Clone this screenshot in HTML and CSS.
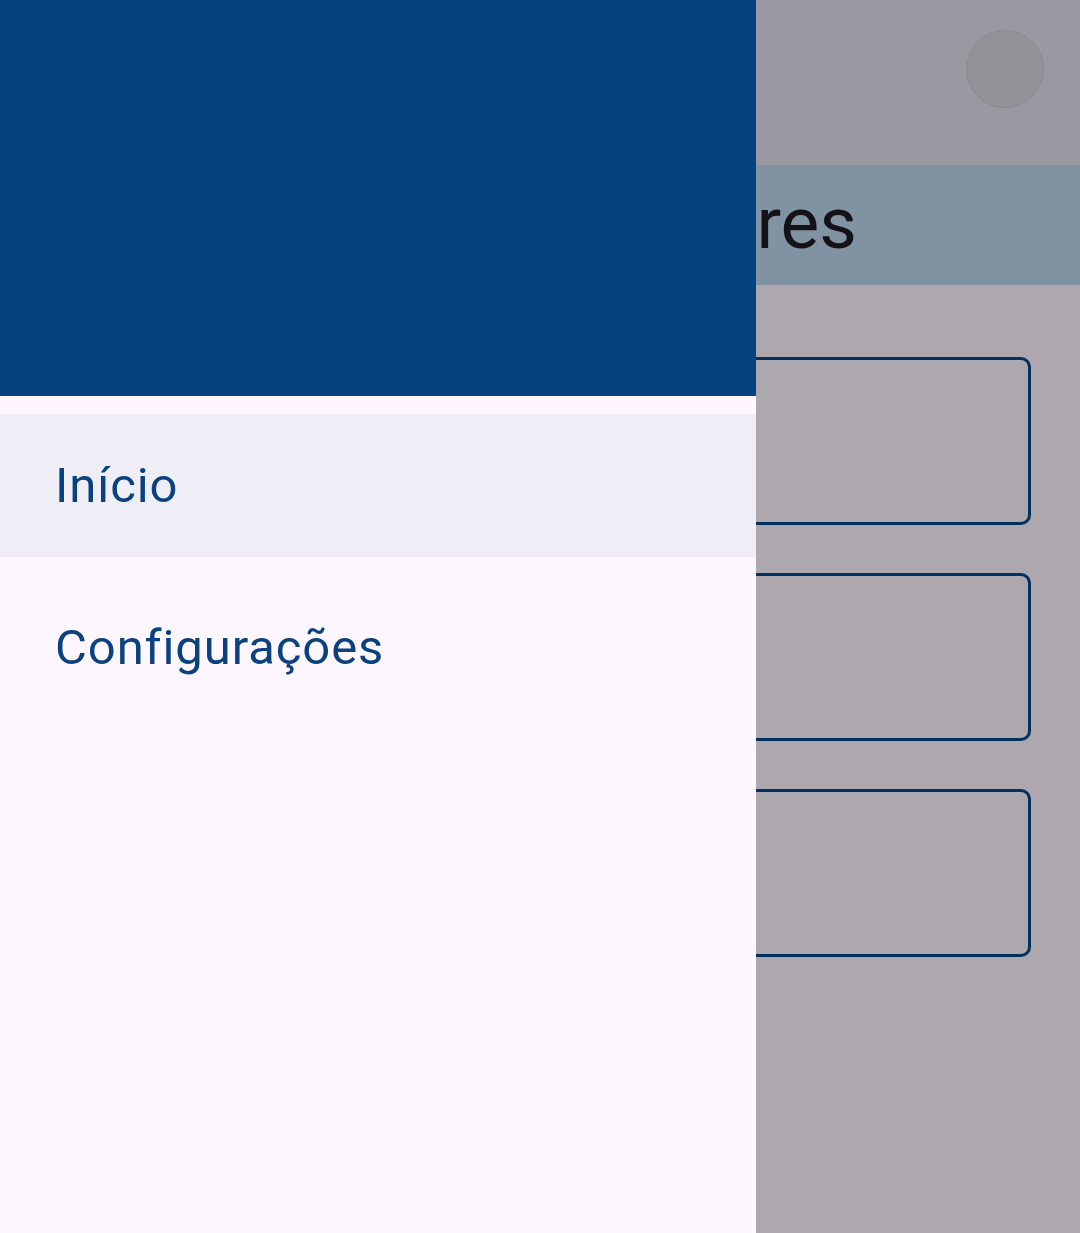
FILE: index.html
```html
<!DOCTYPE html>
<html lang="pt">
<head>
<meta charset="utf-8">
<link rel="stylesheet" href="styles.css">
</head>
<body>
<div class="app">
  <div class="topbar"><div class="avatar"></div></div>
  <div class="titlebar"><span class="title">Leitores</span></div>
  <div class="content">
    <div class="card"></div>
    <div class="card"></div>
    <div class="card"></div>
  </div>
</div>
<nav class="drawer">
  <div class="drawer-header"></div>
  <ul class="nav">
    <li class="nav-item selected">Início</li>
    <li class="nav-item">Configurações</li>
  </ul>
</nav>
</body>
</html>
```

FILE: styles.css
```css
* { box-sizing: border-box; }
html, body { margin: 0; padding: 0; }
body {
  width: 1080px;
  height: 1233px;
  overflow: hidden;
  position: relative;
  font-family: Roboto, "Noto Sans", sans-serif;
  background: #aca8ad;
}
.app {
  display: flex;
  flex-direction: column;
  height: 100%;
}
.topbar {
  height: 165px;
  background: #9a99a2;
  display: flex;
  justify-content: flex-end;
  align-items: flex-start;
  padding: 30px 36px 0 0;
}
.avatar {
  width: 78px;
  height: 78px;
  border-radius: 50%;
  background: #939296;
  border: 1px solid #8a8a8e;
}
.titlebar {
  height: 120px;
  background: #8192a2;
  display: flex;
  align-items: center;
  justify-content: flex-end;
  padding-right: 223px;
}
.title {
  font-size: 73px;
  color: #141218;
  line-height: 1;
  margin-bottom: 4px;
}
.content {
  display: flex;
  flex-direction: column;
  gap: 48px;
  padding: 72px 49px 0 48px;
}
.card {
  height: 168px;
  border: 3px solid #04305f;
  border-radius: 10px;
}
.drawer {
  position: absolute;
  left: 0;
  top: 0;
  width: 756px;
  height: 1233px;
  background: #fef7ff;
}
.drawer-header {
  height: 396px;
  background: #044280;
}
.nav {
  list-style: none;
  margin: 0;
  padding: 18px 0 0 0;
  display: flex;
  flex-direction: column;
  gap: 19px;
}
.nav-item {
  height: 143px;
  display: flex;
  align-items: center;
  padding-left: 55px;
  font-size: 49px;
  letter-spacing: 0.9px;
  color: #0a4280;
}
.nav-item.selected {
  background: #efedf6;
}
```
